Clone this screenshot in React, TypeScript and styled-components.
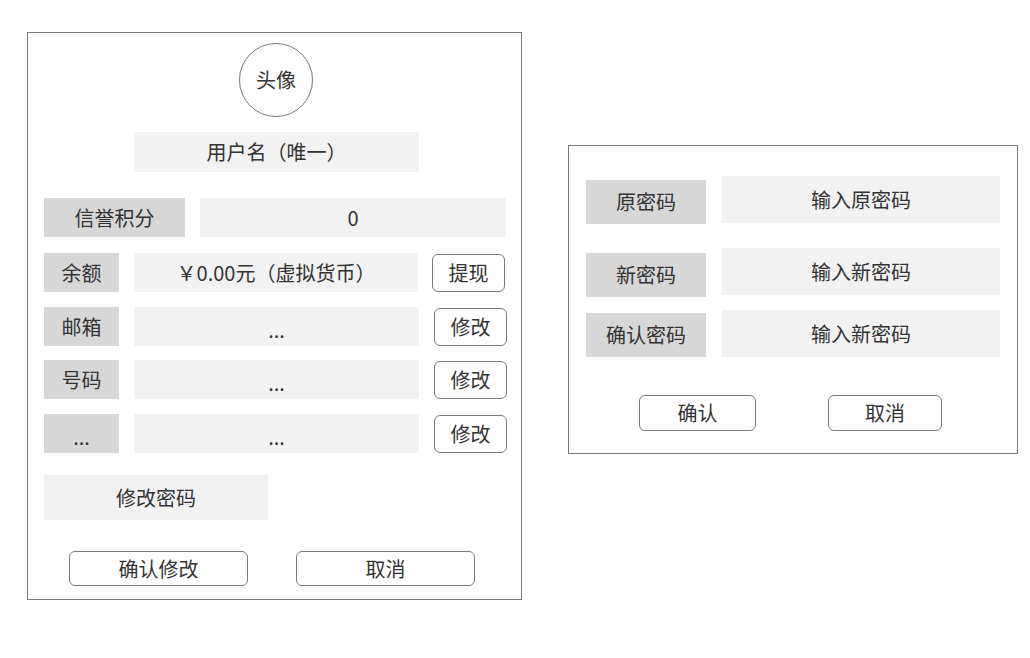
import React from "react";
import styled, { createGlobalStyle } from "styled-components";

const Global = createGlobalStyle`
  html, body { margin: 0; padding: 0; background: #ffffff; }
  body { font-family: "Noto Sans CJK SC", "Noto Sans", sans-serif; color: #333333; }
`;

const Page = styled.div`
  display: flex;
  align-items: flex-start;
  padding: 32px 0 0 27px;
  gap: 46px;
`;

const Panel = styled.div<{ $w: number; $h: number; $top?: number }>`
  box-sizing: border-box;
  width: ${(p) => p.$w}px;
  height: ${(p) => p.$h}px;
  margin-top: ${(p) => p.$top ?? 0}px;
  border: 1px solid #797979;
  display: flex;
  flex-direction: column;
`;

const Avatar = styled.div`
  box-sizing: border-box;
  width: 74px;
  height: 74px;
  border: 1px solid #797979;
  border-radius: 50%;
  align-self: center;
  margin: 10px 0 0 3px;
  display: flex;
  align-items: center;
  justify-content: center;
  font-size: 20px;
  line-height: 1;
`;

const Row = styled.div<{ $top: number; $left?: number; $align?: string }>`
  display: flex;
  align-items: ${(p) => p.$align ?? "center"};
  margin-top: ${(p) => p.$top}px;
  padding-left: ${(p) => p.$left ?? 16}px;
`;

const Box = styled.div<{ $w: number; $h: number; $ml?: number; $dark?: boolean; $mt?: number }>`
  box-sizing: border-box;
  width: ${(p) => p.$w}px;
  height: ${(p) => p.$h}px;
  margin-left: ${(p) => p.$ml ?? 0}px;
  margin-top: ${(p) => p.$mt ?? 0}px;
  background: ${(p) => (p.$dark ? "#d7d7d7" : "#f2f2f2")};
  display: flex;
  align-items: center;
  justify-content: center;
  font-size: 20px;
  line-height: 1;
  white-space: nowrap;
  flex-shrink: 0;
`;

const Button = styled.button<{ $w: number; $h: number; $ml?: number }>`
  box-sizing: border-box;
  width: ${(p) => p.$w}px;
  height: ${(p) => p.$h}px;
  margin-left: ${(p) => p.$ml ?? 0}px;
  border: 1px solid #797979;
  border-radius: 6px;
  background: #ffffff;
  color: #333333;
  font-family: "Noto Sans CJK SC", "Noto Sans", sans-serif;
  font-size: 20px;
  line-height: 1;
  padding: 0;
  display: flex;
  align-items: center;
  justify-content: center;
  flex-shrink: 0;
`;

const Dots = styled.span`
  position: relative;
  top: 3px;
`;

export default function App() {
  return (
    <>
      <Global />
      <Page>
        <Panel $w={495} $h={568}>
          <Avatar>头像</Avatar>
          <Row $top={15} $left={106}>
            <Box $w={285} $h={40}>用户名（唯一）</Box>
          </Row>
          <Row $top={26}>
            <Box $w={141} $h={39} $dark>信誉积分</Box>
            <Box $w={306} $h={39} $ml={15}>0</Box>
          </Row>
          <Row $top={16}>
            <Box $w={75} $h={39} $dark>余额</Box>
            <Box $w={284} $h={39} $ml={15}>￥0.00元（虚拟货币）</Box>
            <Button $w={73} $h={38} $ml={14}>提现</Button>
          </Row>
          <Row $top={15}>
            <Box $w={75} $h={39} $dark>邮箱</Box>
            <Box $w={285} $h={39} $ml={15}><Dots>...</Dots></Box>
            <Button $w={73} $h={38} $ml={15}>修改</Button>
          </Row>
          <Row $top={14}>
            <Box $w={75} $h={39} $dark>号码</Box>
            <Box $w={285} $h={39} $ml={15}><Dots>...</Dots></Box>
            <Button $w={73} $h={38} $ml={15}>修改</Button>
          </Row>
          <Row $top={15}>
            <Box $w={75} $h={39} $dark><Dots>...</Dots></Box>
            <Box $w={285} $h={39} $ml={15}><Dots>...</Dots></Box>
            <Button $w={73} $h={38} $ml={15}>修改</Button>
          </Row>
          <Row $top={22}>
            <Box $w={224} $h={45}>修改密码</Box>
          </Row>
          <Row $top={31} $left={41}>
            <Button $w={179} $h={35}>确认修改</Button>
            <Button $w={179} $h={35} $ml={48}>取消</Button>
          </Row>
        </Panel>

        <Panel $w={450} $h={309} $top={113}>
          <Row $top={30} $left={17} $align="flex-start">
            <Box $w={120} $h={44} $dark $mt={4}>原密码</Box>
            <Box $w={278} $h={47} $ml={16}>输入原密码</Box>
          </Row>
          <Row $top={24} $left={17} $align="flex-start">
            <Box $w={120} $h={44} $dark $mt={5}>新密码</Box>
            <Box $w={278} $h={47} $ml={16}>输入新密码</Box>
          </Row>
          <Row $top={13} $left={17} $align="flex-start">
            <Box $w={120} $h={44} $dark $mt={3}>确认密码</Box>
            <Box $w={278} $h={47} $ml={16}>输入新密码</Box>
          </Row>
          <Row $top={38} $left={70}>
            <Button $w={117} $h={36}>确认</Button>
            <Button $w={114} $h={36} $ml={72}>取消</Button>
          </Row>
        </Panel>
      </Page>
    </>
  );
}
